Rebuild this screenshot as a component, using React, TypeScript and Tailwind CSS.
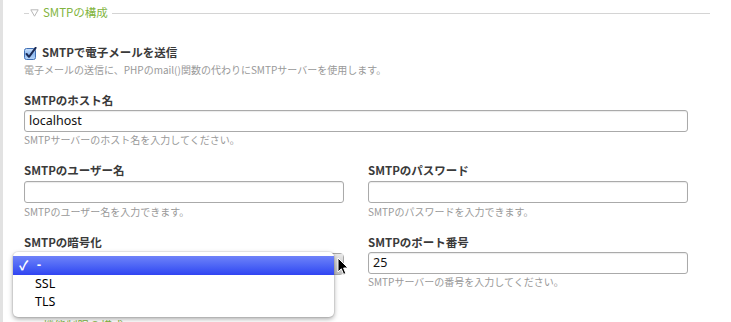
import React from 'react';

const JP = "font-['Noto_Sans_CJK_JP',sans-serif]";
const LATIN = "font-['Noto_Sans','Noto_Sans_CJK_JP',sans-serif]";

function Legend({ title }: { title: string }) {
  return (
    <div className="flex h-[26px] items-center pr-[21px]">
      <div className="h-px w-[5px] bg-[#d4d4d4]" />
      <svg width="9" height="8" viewBox="0 0 9 8" className="ml-[1px]">
        <path d="M0.8 0.8 H8.2 L4.5 7.2 Z" fill="none" stroke="#b8b8b8" strokeWidth="1" />
      </svg>
      <span className={`${JP} ml-[4px] text-[11.5px] leading-none text-[#82b440]`}>{title}</span>
      <div className="ml-[4px] h-px flex-1 bg-[#d4d4d4]" />
    </div>
  );
}

function AquaCheckbox() {
  return (
    <svg width="13" height="13" viewBox="0 0 13 13">
      <defs>
        <linearGradient id="cb" x1="0" y1="0" x2="0" y2="1">
          <stop offset="0" stopColor="#cfe3fb" />
          <stop offset="0.5" stopColor="#8fb9ef" />
          <stop offset="1" stopColor="#b6d6fb" />
        </linearGradient>
      </defs>
      <rect x="0.5" y="1.5" width="11" height="11" rx="2" fill="url(#cb)" stroke="#3f6fb5" />
      <path d="M2.6 7 L5 9.8 L11.6 0.8" fill="none" stroke="#1a2a55" strokeWidth="2" strokeLinecap="round" strokeLinejoin="round" />
    </svg>
  );
}

function Label({ children }: { children: React.ReactNode }) {
  return (
    <div className={`${JP} h-[16px] text-[11.5px] font-bold leading-[16px] text-[#3a3a3a]`}>{children}</div>
  );
}

function Help({ children }: { children: React.ReactNode }) {
  return <div className={`${JP} h-[14px] text-[10px] leading-[14px] text-[#999]`}>{children}</div>;
}

function TextBox({ value }: { value?: string }) {
  return (
    <div
      className={`${LATIN} flex h-[22px] items-center rounded-[3px] border border-[#aaaaaa] bg-white px-[4px] text-[12.5px] text-[#111] shadow-[inset_0_1px_1px_rgba(0,0,0,0.08)]`}
    >
      {value}
    </div>
  );
}

function Field({
  label,
  help,
  value,
  gap = 3,
}: {
  label: string;
  help: string;
  value?: string;
  gap?: number;
}) {
  return (
    <div className="flex flex-col">
      <Label>{label}</Label>
      <div className={gap === 2 ? 'mt-[2px]' : 'mt-[3px]'}>
        <TextBox value={value} />
      </div>
      <div className={gap === 2 ? 'mt-[1px]' : 'mt-[2px]'}>
        <Help>{help}</Help>
      </div>
    </div>
  );
}

function PopupMenu() {
  return (
    <div className="absolute left-[-11px] top-[-1px] z-10 h-[65px] w-[321px] rounded-[5px] bg-white pt-[4px] shadow-[0_2px_5px_rgba(0,0,0,0.35),0_0_0_1px_rgba(0,0,0,0.06)]">
      <div className={`${LATIN} flex h-[19px] items-center bg-gradient-to-b from-[#6f82f9] to-[#3143f1] text-[12.5px] text-white`}>
        <span className="ml-[6px] w-[18px] text-[13px] font-bold">✓</span>
        <span className="font-bold">-</span>
      </div>
      <div className={`${LATIN} flex h-[18px] items-center pl-[22px] text-[12.5px] text-black`}>SSL</div>
      <div className={`${LATIN} flex h-[18px] items-center pl-[22px] text-[12.5px] text-black`}>TLS</div>
    </div>
  );
}

function Cursor() {
  return (
    <svg width="12" height="19" viewBox="0 0 12 19" className="absolute left-[313px] top-[4px] z-20">
      <path
        d="M1 1 L1 15 L4.3 11.8 L6.6 17.4 L8.8 16.4 L6.6 11 L11 11 Z"
        fill="#000"
        stroke="#fff"
        strokeWidth="1"
        strokeLinejoin="round"
      />
    </svg>
  );
}

function EncryptionField() {
  return (
    <div className="flex flex-col">
      <Label>SMTPの暗号化</Label>
      <div className="relative mt-[3px]">
        <div className="flex h-[22px] items-center justify-end rounded-[4px] border border-[#a6a6a6] bg-gradient-to-b from-[#fdfdfd] to-[#e4e4e4]">
          <div className="h-full w-[9px] bg-gradient-to-b from-[#e8e8e8] to-[#bdbdbd]" />
        </div>
        <PopupMenu />
        <Cursor />
      </div>
      <div className="mt-[2px]">
        <Help>SMTPサーバーの暗号化方式を選択してください。</Help>
      </div>
    </div>
  );
}

export default function App() {
  return (
    <div className="relative flex h-[322px] w-[731px] overflow-hidden bg-white">
      <div className="w-[3px] shrink-0 bg-[#e2e2e2]" />
      <div className="flex-1 pl-[21px]">
        <Legend title="SMTPの構成" />

        <div className="mt-[19px] flex h-[16px] items-center">
          <AquaCheckbox />
          <span className={`${JP} ml-[5px] text-[11.5px] font-bold text-[#3a3a3a]`}>SMTPで電子メールを送信</span>
        </div>
        <div className="mt-[2px]">
          <Help>電子メールの送信に、PHPのmail()関数の代わりにSMTPサーバーを使用します。</Help>
        </div>

        <div className="mt-[15px] w-[664px]">
          <Field label="SMTPのホスト名" help="SMTPサーバーのホスト名を入力してください。" value="localhost" gap={2} />
        </div>

        <div className="mt-[15px] grid w-[664px] grid-cols-2 gap-x-[24px]">
          <Field label="SMTPのユーザー名" help="SMTPのユーザー名を入力できます。" />
          <Field label="SMTPのパスワード" help="SMTPのパスワードを入力できます。" />
        </div>

        <div className="mt-[15px] grid w-[664px] grid-cols-2 gap-x-[24px]">
          <EncryptionField />
          <Field label="SMTPのポート番号" help="SMTPサーバーの番号を入力してください。" value="25" gap={2} />
        </div>

        <div className="mt-[22px]">
          <Legend title="機能制限の構成" />
        </div>
      </div>
    </div>
  );
}
